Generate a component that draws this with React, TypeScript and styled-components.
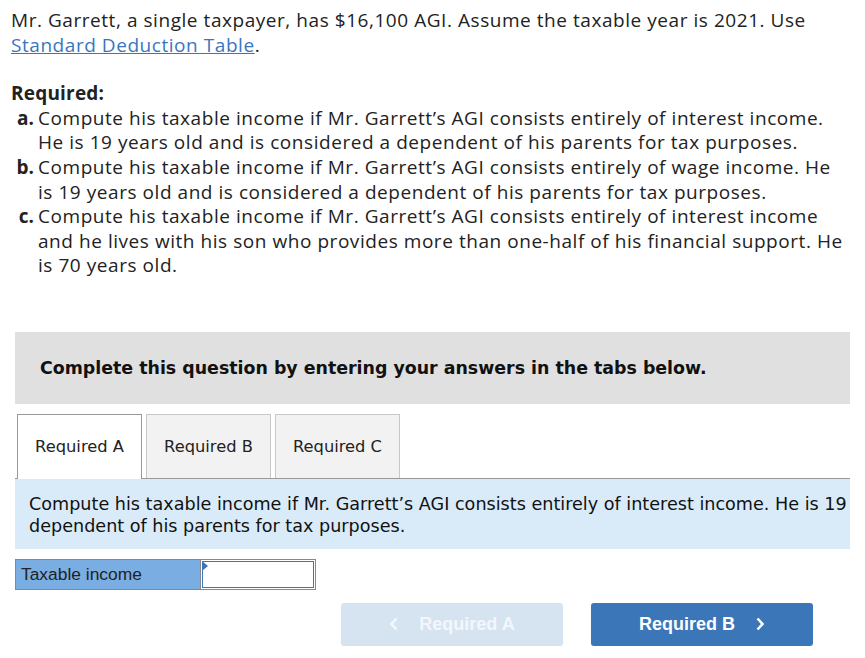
import React from "react";
import styled, { createGlobalStyle } from "styled-components";

const Global = createGlobalStyle`
  html, body { margin: 0; padding: 0; background: #fff; }
  body { width: 865px; overflow: hidden; }
`;

const Page = styled.div`
  padding: 8px 0 0 0;
  width: 865px;
`;

const Question = styled.div`
  margin-left: 11px;
  width: 832px;
  font-family: "Open Sans", "Liberation Sans", sans-serif;
  font-size: 19px;
  letter-spacing: 0.55px;
  line-height: 24.6px;
  color: #222;
`;

const Para = styled.p`
  margin: 0 0 24px 0;
`;

const Link = styled.a`
  color: #3a76c0;
  text-decoration: underline;
`;

const ReqTitle = styled.div`
  font-weight: 700;
  letter-spacing: 0.2px;
`;

const ReqList = styled.div`
  display: grid;
  grid-template-columns: 23px 1fr;
  column-gap: 4px;
`;

const ReqLabel = styled.span`
  font-weight: 700;
  letter-spacing: 0;
  text-align: right;
`;

const Main = styled.div`
  margin: 54px 0 0 15px;
  width: 835px;
`;

const Instruction = styled.div`
  background: #e0e0e0;
  height: 72px;
  display: flex;
  align-items: center;
  padding-left: 25px;
  font-family: "DejaVu Sans", Verdana, sans-serif;
  font-weight: 700;
  font-size: 17.4px;
  color: #111;
`;

const Tabs = styled.div`
  display: flex;
  gap: 4px;
  margin-top: 10px;
  padding-left: 2px;
  border-bottom: 1px solid #999;
`;

const Tab = styled.div<{ $active?: boolean }>`
  width: 125px;
  box-sizing: border-box;
  display: flex;
  align-items: center;
  justify-content: center;
  font-family: "DejaVu Sans", Verdana, sans-serif;
  font-size: 16.3px;
  color: #222;
  background: ${(p) => (p.$active ? "#fff" : "#f2f2f2")};
  border: 1px solid ${(p) => (p.$active ? "#999" : "#c8c8c8")};
  border-bottom: none;
  margin-bottom: ${(p) => (p.$active ? "-1px" : "0")};
  height: ${(p) => (p.$active ? "65px" : "64px")};
`;

const Prompt = styled.div`
  background: #d9ebf8;
  height: 70px;
  box-sizing: border-box;
  padding: 14px 0 0 14px;
  overflow: hidden;
`;

const PromptText = styled.p`
  margin: 0;
  width: 1120px;
  font-family: "DejaVu Sans", Verdana, sans-serif;
  font-size: 17.6px;
  line-height: 22px;
  color: #111;
`;

const AnswerRow = styled.div`
  display: flex;
  margin-top: 10px;
  width: 301px;
  height: 31px;
  border: 1px solid #888;
  box-sizing: border-box;
`;

const AnswerLabel = styled.div`
  width: 185px;
  background: #7aaee3;
  border-right: 1px solid #888;
  font-family: "Liberation Sans", Arial, sans-serif;
  font-size: 17.4px;
  color: #222;
  display: flex;
  align-items: center;
  padding-left: 5px;
  box-sizing: border-box;
`;

const InputCell = styled.div`
  flex: 1;
  position: relative;
  padding: 1px;
  background: #fff;
`;

const Input = styled.input`
  width: 100%;
  height: 100%;
  box-sizing: border-box;
  border: 1px solid #3a76c0;
  outline: none;
  background: #fff;
`;

const Flag = styled.span`
  position: absolute;
  left: 1px;
  top: 1px;
  width: 0;
  height: 0;
  border-top: 5px solid transparent;
  border-bottom: 5px solid transparent;
  border-left: 6px solid #3a76c0;
`;

const Nav = styled.div`
  display: flex;
  justify-content: flex-end;
  gap: 28px;
  margin: 13px 37px 0 0;
`;

const NavButton = styled.button<{ $disabled?: boolean }>`
  width: 222px;
  height: 43px;
  border: none;
  border-radius: 3px;
  background: ${(p) => (p.$disabled ? "#d6e3f1" : "#3a76b8")};
  color: ${(p) => (p.$disabled ? "#f3f7fb" : "#fff")};
  font-family: "Liberation Sans", Arial, sans-serif;
  font-weight: 700;
  font-size: 18px;
  display: flex;
  align-items: center;
  justify-content: center;
  gap: 20px;
  padding: 0;
  cursor: ${(p) => (p.$disabled ? "default" : "pointer")};
`;

const Chevron = ({ dir }: { dir: "left" | "right" }) => (
  <svg width="10" height="14" viewBox="0 0 10 14">
    <path
      d={dir === "left" ? "M7.5 1.5 L2.5 7 L7.5 12.5" : "M2.5 1.5 L7.5 7 L2.5 12.5"}
      fill="none"
      stroke="currentColor"
      strokeWidth="2.6"
    />
  </svg>
);

export default function App() {
  return (
    <Page>
      <Global />
      <Question>
        <Para>
          Mr. Garrett, a single taxpayer, has $16,100 AGI. Assume the taxable year is 2021. Use{" "}
          <Link href="#">Standard Deduction Table</Link>.
        </Para>
        <ReqTitle>Required:</ReqTitle>
        <ReqList>
          <ReqLabel>a.</ReqLabel>
          <span>
            Compute his taxable income if Mr. Garrett’s AGI consists entirely of interest income. He is 19 years old
            and is considered a dependent of his parents for tax purposes.
          </span>
          <ReqLabel>b.</ReqLabel>
          <span>
            Compute his taxable income if Mr. Garrett’s AGI consists entirely of wage income. He is 19 years old and
            is considered a dependent of his parents for tax purposes.
          </span>
          <ReqLabel>c.</ReqLabel>
          <span>
            Compute his taxable income if Mr. Garrett’s AGI consists entirely of interest income and he lives with his
            son who provides more than one-half of his financial support. He is 70 years old.
          </span>
        </ReqList>
      </Question>
      <Main>
        <Instruction>Complete this question by entering your answers in the tabs below.</Instruction>
        <Tabs>
          <Tab $active>Required A</Tab>
          <Tab>Required B</Tab>
          <Tab>Required C</Tab>
        </Tabs>
        <Prompt>
          <PromptText>
            Compute his taxable income if Mr. Garrett’s AGI consists entirely of interest income. He is 19 years old
            and is considered a dependent of his parents for tax purposes.
          </PromptText>
        </Prompt>
        <AnswerRow>
          <AnswerLabel>Taxable income</AnswerLabel>
          <InputCell>
            <Input aria-label="Taxable income" />
            <Flag />
          </InputCell>
        </AnswerRow>
        <Nav>
          <NavButton $disabled>
            <Chevron dir="left" />
            Required A
          </NavButton>
          <NavButton>
            Required B
            <Chevron dir="right" />
          </NavButton>
        </Nav>
      </Main>
    </Page>
  );
}
